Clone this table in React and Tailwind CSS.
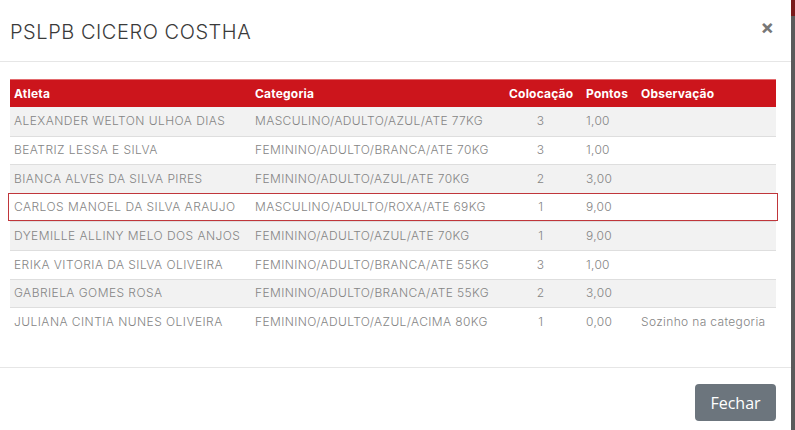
import React from 'react';

const rows = [
  ['ALEXANDER WELTON ULHOA DIAS', 'MASCULINO/ADULTO/AZUL/ATE 77KG', '3', '1,00', ''],
  ['BEATRIZ LESSA E SILVA', 'FEMININO/ADULTO/BRANCA/ATE 70KG', '3', '1,00', ''],
  ['BIANCA ALVES DA SILVA PIRES', 'FEMININO/ADULTO/AZUL/ATE 70KG', '2', '3,00', ''],
  ['CARLOS MANOEL DA SILVA ARAUJO', 'MASCULINO/ADULTO/ROXA/ATE 69KG', '1', '9,00', ''],
  ['DYEMILLE ALLINY MELO DOS ANJOS', 'FEMININO/ADULTO/AZUL/ATE 70KG', '1', '9,00', ''],
  ['ERIKA VITORIA DA SILVA OLIVEIRA', 'FEMININO/ADULTO/BRANCA/ATE 55KG', '3', '1,00', ''],
  ['GABRIELA GOMES ROSA', 'FEMININO/ADULTO/BRANCA/ATE 55KG', '2', '3,00', ''],
  ['JULIANA CINTIA NUNES OLIVEIRA', 'FEMININO/ADULTO/AZUL/ACIMA 80KG', '1', '0,00', 'Sozinho na categoria'],
];

const App = () => {
  return (
    <div className="flex w-[795px] h-[430px] overflow-hidden bg-white font-['Inter',sans-serif]">
      <div className="w-[791px] h-full flex flex-col bg-white">
        <div className="h-[62px] flex items-center justify-between pl-[10px] pr-[17px] border-b border-[#e6e6e6]">
          <h1 className="text-[20px] font-light text-[#3a3a3a] tracking-[0.55px] pt-[2px]">PSLPB CICERO COSTHA</h1>
          <span className="text-[20px] font-bold text-[#777] leading-none pb-[8px]">×</span>
        </div>

        <div className="pt-[17px] pl-[10px] pr-[15px] h-[305px]">
          <div className="flex items-center h-[28px] bg-[#cc151c] border-t border-[#e36b6e] text-white text-[12px] font-bold tracking-[0.2px]">
            <div className="w-[241px] pl-[4px]">Atleta</div>
            <div className="w-[254px] pl-[4px]">Categoria</div>
            <div className="w-[77px] pl-[4px]">Colocação</div>
            <div className="w-[55px] pl-[4px]">Pontos</div>
            <div className="flex-1 pl-[4px]">Observação</div>
          </div>
          {rows.map((r, i) => {
            const hl = i === 3;
            return (
              <div
                key={r[0]}
                className={
                  'flex items-center h-[28.6px] text-[12px] font-light text-[#858585] ' +
                  (i % 2 === 0 ? 'bg-[#f2f2f2] ' : 'bg-white ') +
                  (hl ? 'border border-[#c0363b] -mx-[2px] px-[1px]' : i > 0 ? 'border-t border-[#dedede]' : '')
                }
              >
                <div className="w-[241px] pl-[4px] whitespace-nowrap tracking-[0.45px]">{r[0]}</div>
                <div className="w-[254px] pl-[4px] whitespace-nowrap tracking-[0.38px]">{r[1]}</div>
                <div className="w-[77px] text-center pr-[6px]">{r[2]}</div>
                <div className="w-[55px] pl-[4px] tracking-[0.3px]">{r[3]}</div>
                <div className="flex-1 pl-[4px] whitespace-nowrap tracking-[0.35px]">{r[4]}</div>
              </div>
            );
          })}
        </div>

        <div className="flex-1 border-t border-[#e6e6e6] flex justify-end items-start pt-[16px] pr-[15px]">
          <button className="w-[81px] h-[37px] rounded-[4px] bg-[#6c757d] text-white text-[16px] font-['Open_Sans',sans-serif]">
            Fechar
          </button>
        </div>
      </div>
      <div className="w-[4px] h-full flex flex-col bg-[#5a5a5a]">
        <div className="h-[16px] bg-[#7a1a1a]" />
      </div>
    </div>
  );
};

export default App;
